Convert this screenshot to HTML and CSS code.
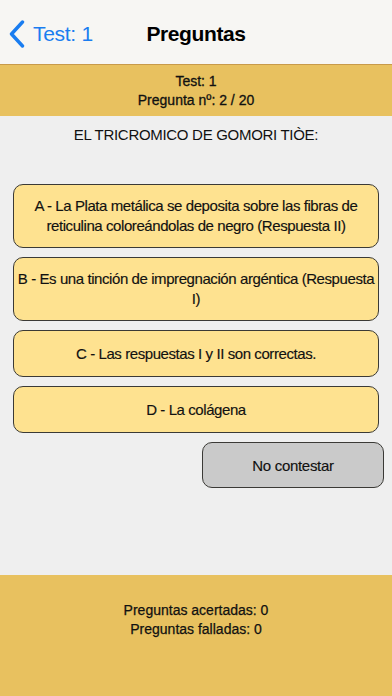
FILE: index.html
```html
<!DOCTYPE html>
<html lang="es">

<head>
    <meta charset="UTF-8">
    <meta name="viewport" content="width=device-width, initial-scale=1.0">
    <title>Preguntas</title>
    <link rel="stylesheet" href="styles.css">
</head>

<body>
    <div class="app">
        <div class="navbar">
            <a class="back" href="#">
                <svg class="chevron" width="16" height="28" viewBox="0 0 16 28">
                    <path d="M13.5 2 L2.5 14 L13.5 26" fill="none" stroke="#1a7df0" stroke-width="3.4" stroke-linecap="round" stroke-linejoin="round" />
                </svg>
                <span>Test: 1</span>
            </a>
            <div class="titulo">Preguntas</div>
        </div>

        <div class="cabecera">
            <div>Test: 1</div>
            <div>Pregunta nº: 2 / 20</div>
        </div>

        <div class="contenido">
            <p class="pregunta">EL TRICROMICO DE GOMORI TIÒE:</p>

            <div class="opciones">
                <button class="opcion alta">A - La Plata metálica se deposita sobre las fibras de reticulina coloreándolas de negro (Respuesta II)</button>
                <button class="opcion alta">B - Es una tinción de impregnación argéntica (Respuesta I)</button>
                <button class="opcion">C - Las respuestas I y II son correctas.</button>
                <button class="opcion">D - La colágena</button>
            </div>

            <div class="fila-saltar">
                <button class="saltar">No contestar</button>
            </div>
        </div>

        <div class="pie">
            <div>Preguntas acertadas: 0</div>
            <div>Preguntas falladas: 0</div>
        </div>
    </div>
</body>

</html>
```

FILE: styles.css
```css
body {
    margin: 0;
    font-family: "Liberation Sans", Arial, sans-serif;
    background-color: #efefef;
}

.app {
    width: 392px;
    height: 696px;
    display: flex;
    flex-direction: column;
}

.navbar {
    height: 64px;
    background-color: #f7f6f3;
    display: flex;
    align-items: center;
    position: relative;
    box-sizing: border-box;
    padding-top: 4px;
}

.back {
    display: flex;
    align-items: center;
    gap: 8px;
    margin-left: 9px;
    color: #1a7df0;
    text-decoration: none;
    font-size: 21px;
    letter-spacing: -0.3px;
}

.titulo {
    position: absolute;
    left: 0;
    right: 0;
    top: 4px;
    bottom: 0;
    display: flex;
    align-items: center;
    justify-content: center;
    font-size: 21px;
    font-weight: bold;
    letter-spacing: -0.4px;
    color: #000;
    pointer-events: none;
}

.cabecera {
    height: 52px;
    background-color: #e8c15f;
    border-top: 1px solid #c89a4a;
    box-sizing: border-box;
    display: flex;
    flex-direction: column;
    justify-content: center;
    align-items: center;
    font-size: 14px;
    line-height: 19px;
    color: #111;
    -webkit-text-stroke: 0.3px #111;
}

.contenido {
    flex: 1;
    padding: 0 8px 0 13px;
}

.pregunta {
    margin: 10px 0 0;
    text-align: center;
    font-size: 15px;
    line-height: 18px;
    letter-spacing: -0.3px;
    color: #111;
    padding-right: 5px;
}

.opciones {
    display: flex;
    flex-direction: column;
    gap: 9px;
    margin-top: 40px;
    margin-right: 5px;
}

.opcion {
    min-height: 47px;
    background-color: #fee290;
    border: 1.5px solid #3b3a36;
    border-radius: 10px;
    font-family: "Liberation Sans", Arial, sans-serif;
    font-size: 15px;
    line-height: 20px;
    letter-spacing: -0.42px;
    color: #111;
    -webkit-text-stroke: 0.15px #111;
    text-align: center;
    padding: 4px 0;
}

.opcion.alta {
    min-height: 64px;
}

.fila-saltar {
    display: flex;
    justify-content: flex-end;
    margin-top: 9px;
}

.saltar {
    width: 182px;
    height: 46px;
    background-color: #cacaca;
    border: 1.5px solid #3b3a36;
    border-radius: 10px;
    font-family: "Liberation Sans", Arial, sans-serif;
    font-size: 15px;
    letter-spacing: -0.3px;
    color: #111;
    -webkit-text-stroke: 0.15px #111;
}

.pie {
    height: 121px;
    background-color: #e8c15f;
    box-sizing: border-box;
    padding-top: 26px;
    text-align: center;
    font-size: 14px;
    line-height: 19px;
    color: #111;
    -webkit-text-stroke: 0.25px #111;
}
```
